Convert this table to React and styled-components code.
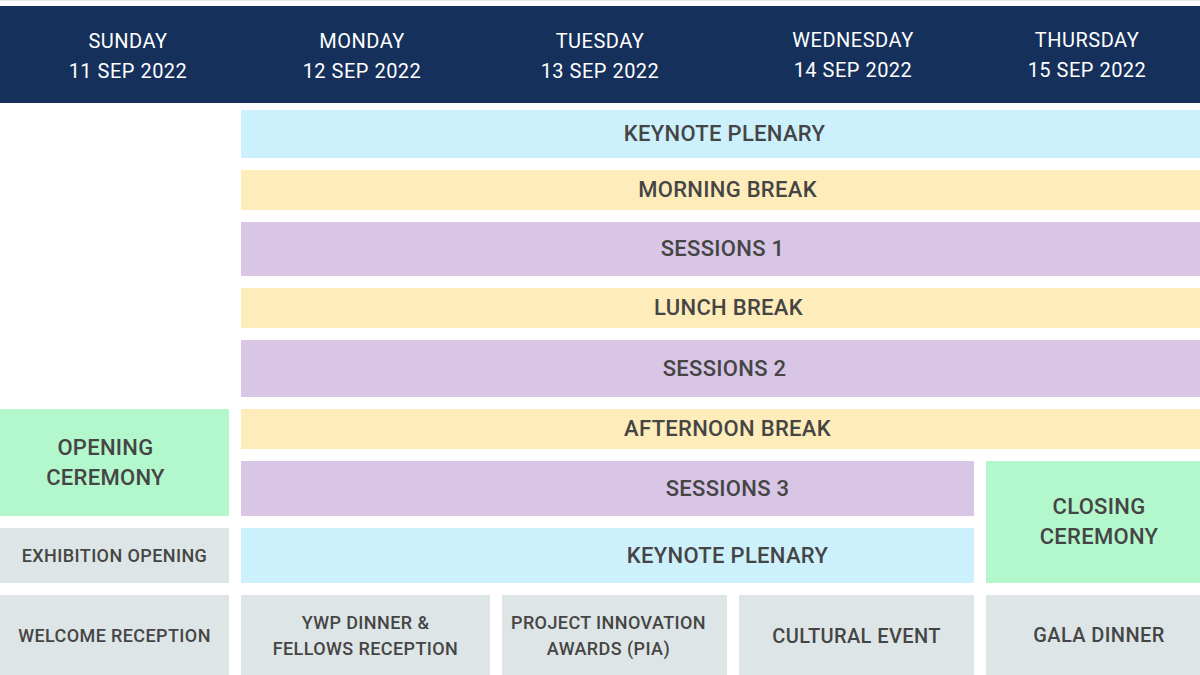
import React from "react";
import styled, { createGlobalStyle } from "styled-components";

const GlobalStyle = createGlobalStyle`
  * { box-sizing: border-box; }
  body {
    margin: 0;
    background: #ffffff;
    font-family: Roboto, "Liberation Sans", sans-serif;
  }
`;

const tones = {
  blue: "#cdf0fd",
  yellow: "#feedbb",
  purple: "#d9c5e5",
  green: "#b3f7cc",
  grey: "#dde5e6",
};

const days = [
  { day: "SUNDAY", date: "11 SEP 2022" },
  { day: "MONDAY", date: "12 SEP 2022" },
  { day: "TUESDAY", date: "13 SEP 2022" },
  { day: "WEDNESDAY", date: "14 SEP 2022", lift: 2 },
  { day: "THURSDAY", date: "15 SEP 2022", lift: 2 },
];

// col / row are grid lines, shift moves the label centre off the box centre
const blocks = [
  { text: "KEYNOTE PLENARY", tone: "blue", col: "2 / 6", row: "1", shift: 4 },
  { text: "MORNING BREAK", tone: "yellow", col: "2 / 6", row: "2", shift: 7 },
  { text: "SESSIONS 1", tone: "purple", col: "2 / 6", row: "3", shift: 2 },
  { text: "LUNCH BREAK", tone: "yellow", col: "2 / 6", row: "4", shift: 8 },
  { text: "SESSIONS 2", tone: "purple", col: "2 / 6", row: "5", shift: 4 },
  { text: "AFTERNOON BREAK", tone: "yellow", col: "2 / 6", row: "6", shift: 7 },
  { text: ["OPENING", "CEREMONY"], tone: "green", col: "1", row: "6 / 8", shift: -9 },
  { text: "SESSIONS 3", tone: "purple", col: "2 / 5", row: "7", shift: 120 },
  { text: ["CLOSING", "CEREMONY"], tone: "green", col: "5", row: "7 / 9", shift: 6 },
  { text: "EXHIBITION OPENING", tone: "grey", col: "1", row: "8", size: 18 },
  { text: "KEYNOTE PLENARY", tone: "blue", col: "2 / 5", row: "8", shift: 120 },
  { text: "WELCOME RECEPTION", tone: "grey", col: "1", row: "9", size: 18 },
  { text: ["YWP DINNER &", "FELLOWS RECEPTION"], tone: "grey", col: "2", row: "9", size: 18 },
  { text: ["PROJECT INNOVATION", "AWARDS (PIA)"], tone: "grey", col: "3", row: "9", size: 18, shift: -6 },
  { text: "CULTURAL EVENT", tone: "grey", col: "4", row: "9", size: 20 },
  { text: "GALA DINNER", tone: "grey", col: "5", row: "9", size: 20, shift: 6, lift: 1 },
];

export default function App() {
  return (
    <>
      <GlobalStyle />
      <Page>
        <Header>
          {days.map((d) => (
            <DayHead key={d.day} $lift={d.lift || 0}>
              <span>{d.day}</span>
              <span>{d.date}</span>
            </DayHead>
          ))}
        </Header>
        <Schedule>
          {blocks.map((b, ix) => (
            <Block
              key={ix}
              $tone={b.tone}
              $col={b.col}
              $row={b.row}
              $shift={b.shift || 0}
              $size={b.size || 22}
              $lift={b.lift || 0}
            >
              {Array.isArray(b.text)
                ? b.text.map((line) => <span key={line}>{line}</span>)
                : b.text}
            </Block>
          ))}
        </Schedule>
      </Page>
    </>
  );
}

const Page = styled.div`
  width: 1200px;
  height: 675px;
  overflow: hidden;
  padding-top: 5px;
  display: flex;
  flex-direction: column;
  gap: 7px;
  background: #ffffff;
  border-top: 1px solid #e4e6e8;
`;

const Header = styled.header`
  height: 97px;
  flex: none;
  display: grid;
  grid-template-columns: 256px 212px 264px 242px 226px;
  align-items: center;
  background: #15305a;
`;

const DayHead = styled.div`
  display: flex;
  flex-direction: column;
  align-items: center;
  color: #ffffff;
  font-size: 20px;
  line-height: 30px;
  letter-spacing: 0.5px;
  padding-top: ${(p) => 2 - p.$lift * 2}px;
`;

const Schedule = styled.div`
  display: grid;
  grid-template-columns: 229px 249px 225px 235px 214px;
  grid-template-rows: 48px 40px 54px 40px 57px 40px 55px 55px 81px;
  column-gap: 12px;
  row-gap: 12px;
`;

const Block = styled.div`
  grid-column: ${(p) => p.$col};
  grid-row: ${(p) => p.$row};
  background: ${(p) => tones[p.$tone]};
  display: flex;
  flex-direction: column;
  align-items: center;
  justify-content: center;
  text-align: center;
  padding-left: ${(p) => Math.max(p.$shift, 0) * 2}px;
  padding-right: ${(p) => Math.max(-p.$shift, 0) * 2}px;
  padding-bottom: ${(p) => p.$lift * 2}px;
  color: #454545;
  font-weight: 500;
  font-size: ${(p) => p.$size}px;
  line-height: ${(p) => (p.$size >= 21 ? 30 : 26)}px;
  letter-spacing: ${(p) => (p.$size >= 21 ? 0.3 : 0.4)}px;
  white-space: nowrap;
`;
